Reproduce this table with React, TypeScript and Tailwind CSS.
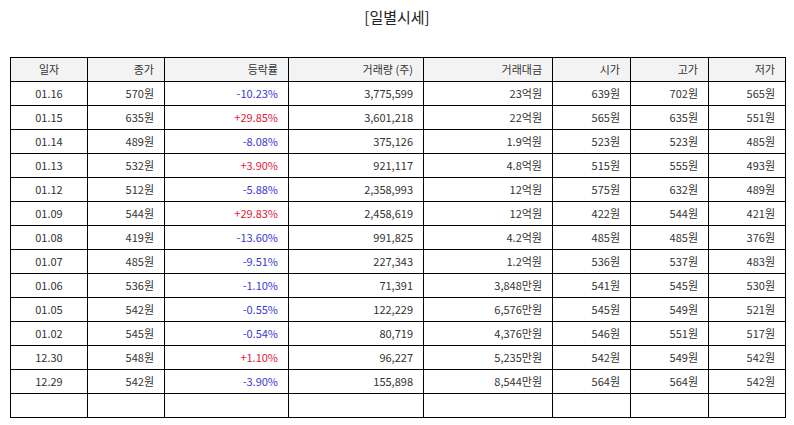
const rows: [string, string, string, string, string, string, string, string][] = [
  ["01.16", "570원", "-10.23%", "3,775,599", "23억원", "639원", "702원", "565원"],
  ["01.15", "635원", "+29.85%", "3,601,218", "22억원", "565원", "635원", "551원"],
  ["01.14", "489원", "-8.08%", "375,126", "1.9억원", "523원", "523원", "485원"],
  ["01.13", "532원", "+3.90%", "921,117", "4.8억원", "515원", "555원", "493원"],
  ["01.12", "512원", "-5.88%", "2,358,993", "12억원", "575원", "632원", "489원"],
  ["01.09", "544원", "+29.83%", "2,458,619", "12억원", "422원", "544원", "421원"],
  ["01.08", "419원", "-13.60%", "991,825", "4.2억원", "485원", "485원", "376원"],
  ["01.07", "485원", "-9.51%", "227,343", "1.2억원", "536원", "537원", "483원"],
  ["01.06", "536원", "-1.10%", "71,391", "3,848만원", "541원", "545원", "530원"],
  ["01.05", "542원", "-0.55%", "122,229", "6,576만원", "545원", "549원", "521원"],
  ["01.02", "545원", "-0.54%", "80,719", "4,376만원", "546원", "551원", "517원"],
  ["12.30", "548원", "+1.10%", "96,227", "5,235만원", "542원", "549원", "542원"],
  ["12.29", "542원", "-3.90%", "155,898", "8,544만원", "564원", "564원", "542원"],
]

const headers = ["일자", "종가", "등락률", "거래량 (주)", "거래대금", "시가", "고가", "저가"]
const widths = [77, 77, 124, 135, 129, 78, 78, 77]

export default function App() {
  return (
    <div
      className="w-[794px] h-[425px] bg-white text-[#333] overflow-hidden"
      style={{ fontFamily: '"Noto Sans CJK KR", "Noto Sans", sans-serif' }}
    >
      <h1 className="pt-[5px] h-[57px] text-center text-[15px] leading-[24px] text-[#222]">[일별시세]</h1>
      <table className="ml-[10px] w-[775px] border-collapse table-fixed text-[11px]">
        <colgroup>
          {widths.map((w, i) => (
            <col key={i} style={{ width: w }} />
          ))}
        </colgroup>
        <thead>
          <tr className="h-[24px] bg-[#f3f3f3]">
            {headers.map((h, i) => (
              <th
                key={h}
                className={`border border-black font-normal px-[10px] ${i === 0 ? "text-center" : "text-right"}`}
              >
                {h}
              </th>
            ))}
          </tr>
        </thead>
        <tbody>
          {rows.map((r) => (
            <tr key={r[0]} className="h-[24px]">
              {r.map((c, i) => (
                <td
                  key={i}
                  className={`border border-black px-[10px] ${i === 0 ? "text-center" : "text-right"} ${
                    i === 2 ? (c.startsWith("+") ? "text-[#e0203a]" : "text-[#3a3ad0]") : ""
                  }`}
                >
                  {c}
                </td>
              ))}
            </tr>
          ))}
          <tr className="h-[24px]">
            {widths.map((_, i) => (
              <td key={i} className="border border-black"></td>
            ))}
          </tr>
        </tbody>
      </table>
    </div>
  )
}
